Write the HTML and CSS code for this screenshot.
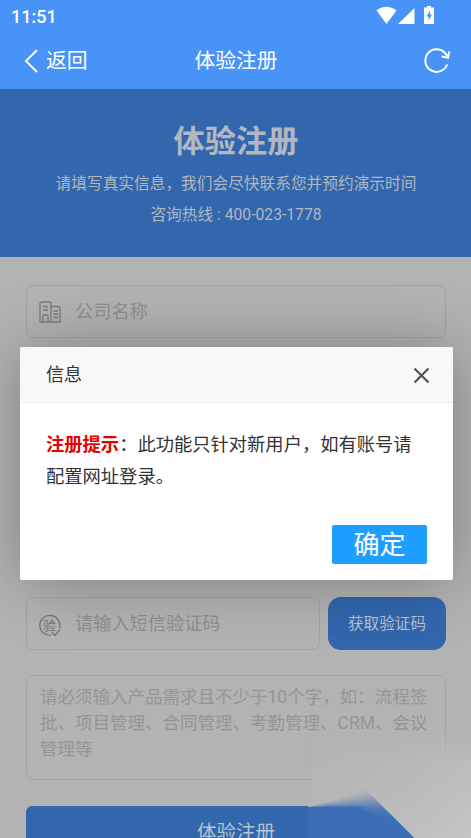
FILE: index.html
```html
<!DOCTYPE html>
<html lang="zh-CN">
<head>
<meta charset="utf-8">
<title>体验注册</title>
<link rel="stylesheet" href="styles.css">
</head>
<body>
<div class="screen">
  <header class="top">
    <div class="status">
      <span class="time">11:51</span>
      <svg class="status-icons" width="60" height="20" viewBox="0 0 60 20" fill="#fff">
        <path d="M0.500 4.500Q10-3 20.500 4.500L10.500 18Z"/>
        <path d="M38.500 2V18H22Z"/>
        <path d="M51 0h4v1.500h3V18H48V1.500h3z"/>
        <path d="M54 4.500l-3.500 6h2v4l3.500-6h-2z" fill="#4793f8"/>
      </svg>
    </div>
    <nav class="nav">
      <a class="back"><svg width="14" height="24" viewBox="0 0 14 24" fill="none" stroke="#fff" stroke-width="2"><path d="M13 1L2 12l11 11"/></svg><span>返回</span></a>
      <span class="title">体验注册</span>
      <svg class="refresh" width="27" height="26" viewBox="0 0 27 26" fill="none" stroke="#fff" stroke-width="2"><path d="M23.200 16.500A11.300 11.300 0 1 1 21 5L23.500 8.500"/><path d="M17.500 8.500l6.500 1.300L25.200 3.500"/></svg>
    </nav>
  </header>
  <main class="page">
    <section class="hero">
      <h1>体验注册</h1>
      <p>请填写真实信息，我们会尽快联系您并预约演示时间</p>
      <p class="hotline">咨询热线 : 400-023-1778</p>
    </section>
    <form class="form">
      <div class="field company">
        <svg width="22" height="22" viewBox="0 0 22 22" fill="none" stroke="#7b7b7b" stroke-width="1.300"><path d="M1 21V2.500Q1 1 2.500 1h8Q12 1 12 2.500V21M12 5.500h7.500Q21 5.500 21 7v14H1M4 5.500h5M4 9h5M4 21v-6q0-1 1-1h3q1 0 1 1v6M14.500 10H19M14.500 13H19M14.500 16.500H19"/></svg>
        <span>公司名称</span>
      </div>
      <div class="code-row">
        <div class="field code">
          <svg width="22" height="23" viewBox="0 0 22 23" fill="none" stroke="#777" stroke-width="1.400"><path d="M12 21.300A10 10 0 1 1 20.500 14"/><path d="M13 18.500l3 3 5-6"/><text x="4" y="16" class="seal">验</text></svg>
          <span>请输入短信验证码</span>
        </div>
        <button type="button" class="code-button">获取验证码</button>
      </div>
      <div class="area">请必须输入产品需求且不少于10个字，如：流程签<br>批、项目管理、合同管理、考勤管理、CRM、会议<br>管理等</div>
      <button type="button" class="submit">体验注册</button>
    </form>
  </main>
  <svg class="corner" width="171" height="108" viewBox="0 0 171 108">
    <defs>
      <linearGradient id="haze" x1="0" y1="0" x2="1" y2="1"><stop offset="0" stop-color="#b3b3b3"/><stop offset=".5" stop-color="#b9b9b9"/><stop offset="1" stop-color="#c6c6c6"/></linearGradient>
      <linearGradient id="fade" x1="0" y1="0" x2="0" y2="1"><stop offset="0" stop-color="#fff" stop-opacity="0"/><stop offset=".3" stop-color="#fff"/></linearGradient>
      <mask id="veil"><path d="M0 0H171V108H0Z" fill="url(#fade)"/></mask>
      <filter id="soft"><feGaussianBlur stdDeviation="2"/></filter>
      <filter id="edge"><feGaussianBlur stdDeviation=".6"/></filter>
    </defs>
    <g mask="url(#veil)"><path d="M12 -10H180V120H112L60 76H12Z" fill="url(#haze)" filter="url(#soft)"/></g>
    <path d="M8 74H30L22 77H8Z" fill="#b5b5b5"/>
    <g fill="#3a6eb5" filter="url(#edge)">
      <path opacity=".08" d="M8 77L66 60L115 109H8Z"/>
      <path opacity=".12" d="M8 77L69 63L115 109H8Z"/>
      <path opacity=".16" d="M8 77L72 66L115 109H8Z"/>
      <path opacity=".2" d="M8 77L75 69L115 109H8Z"/>
      <path opacity=".25" d="M8 77L78 72L115 109H8Z"/>
      <path opacity=".3" d="M8 77L81 75L115 109H8Z"/>
      <path opacity=".4" d="M8 77L84 78L115 109H8Z"/>
      <path opacity=".5" d="M8 77L87 81L115 109H8Z"/>
      <path opacity=".6" d="M8 77L91 85L115 109H8Z"/>
      <path opacity=".8" d="M8 77L95 89L115 109H8Z"/>
    </g>
  </svg>
  <div class="dialog" role="dialog">
    <div class="dialog-head"><span>信息</span><svg width="17" height="17" viewBox="0 0 17 17" stroke="#505358" stroke-width="2.200"><path d="M1.500 1.500l14 14M15.500 1.500l-14 14"/></svg></div>
    <div class="dialog-body"><b>注册提示</b>：此功能只针对新用户，如有账号请配置网址登录。</div>
    <div class="dialog-actions"><button type="button">确定</button></div>
  </div>
</div>
</body>
</html>
```
FILE: styles.css
```css
* { box-sizing: border-box; }
body { margin: 0; font-family: Roboto, "Noto Sans CJK SC", sans-serif; }
button { border: 0; padding: 0; font-family: inherit; }
.screen { position: relative; width: 471px; height: 838px; overflow: hidden; background: #b3b3b3; }
.top { height: 89px; background: #4793f8; color: #fff; }
.status { display: flex; justify-content: space-between; height: 33px; padding: 6px 35px 0 11px; }
.time { font-size: 18px; line-height: 22px; font-weight: 500; }
.nav { display: grid; grid-template-columns: 1fr auto 1fr; align-items: center; height: 55px; padding: 0 20px 0 24px; font-size: 20.800px; line-height: 30px; }
.title { margin-left: -3px; }
.back { display: flex; align-items: center; gap: 8px; }
.refresh { justify-self: end; }
.hero { height: 168px; padding: 31px 0 0 1px; background: #3267ae; color: #b3b7bf; text-align: center; }
.hero h1 { margin: 0; font-size: 31.200px; line-height: 44px; font-weight: 700; }
.hero p { margin: 8px 0 0; font-size: 15.700px; line-height: 24px; }
.hero .hotline { margin-top: 7px; }
.form { padding: 28px 25px 0 26px; }
.field { display: flex; align-items: center; gap: 14px; height: 53px; padding: 0 12px; border: 1px solid #a4a4a4; border-radius: 7px; color: #8f8f8f; font-size: 18.200px; }
.field svg { flex: none; }
.field span { padding-bottom: 3px; }
.code svg { margin-top: 4px; }
.company { margin-bottom: 259px; }
.seal { font-size: 13px; fill: #777; stroke: none; }
.code-row { display: grid; grid-template-columns: 294px 118px; gap: 8px; }
.code-button { height: 53px; padding-bottom: 3px; border-radius: 13px; background: #3267ae; color: #b8c2d0; font-size: 15.600px; }
.area { height: 105px; margin: 25px 0 26px; padding: 8px 13px; border: 1px solid #a4a4a4; border-radius: 7px; color: #959595; font-size: 17.500px; line-height: 26px; white-space: nowrap; }
.submit { display: block; width: 100%; height: 49px; border-radius: 6px; background: #3267ae; color: #b8c2d0; font-size: 19.500px; }
.corner { position: absolute; right: 0; bottom: 0; }
.dialog { position: absolute; left: 20px; top: 347px; width: 433px; height: 233px; border-radius: 2px; background: #fff; color: #333; box-shadow: 1px 1px 65px rgba(0, 0, 0, .3); }
.dialog-head { display: flex; justify-content: space-between; align-items: center; height: 56px; padding: 0 23px 0 26px; border-bottom: 1px solid #eee; border-radius: 2px 2px 0 0; background: #f8f8f8; font-size: 18px; }
.dialog-head span { padding-bottom: 4px; }
.dialog-head svg { margin-top: 2px; }
.dialog-body { height: 122px; padding: 26px 26px 0; font-size: 18.300px; line-height: 31.500px; }
.dialog-body b { color: #e60000; }
.dialog-actions { display: flex; justify-content: flex-end; padding-right: 26px; }
.dialog-actions button { width: 95px; height: 39px; border-radius: 2px; background: #1e9fff; color: #fff; font-size: 26px; line-height: 38px; }
```
